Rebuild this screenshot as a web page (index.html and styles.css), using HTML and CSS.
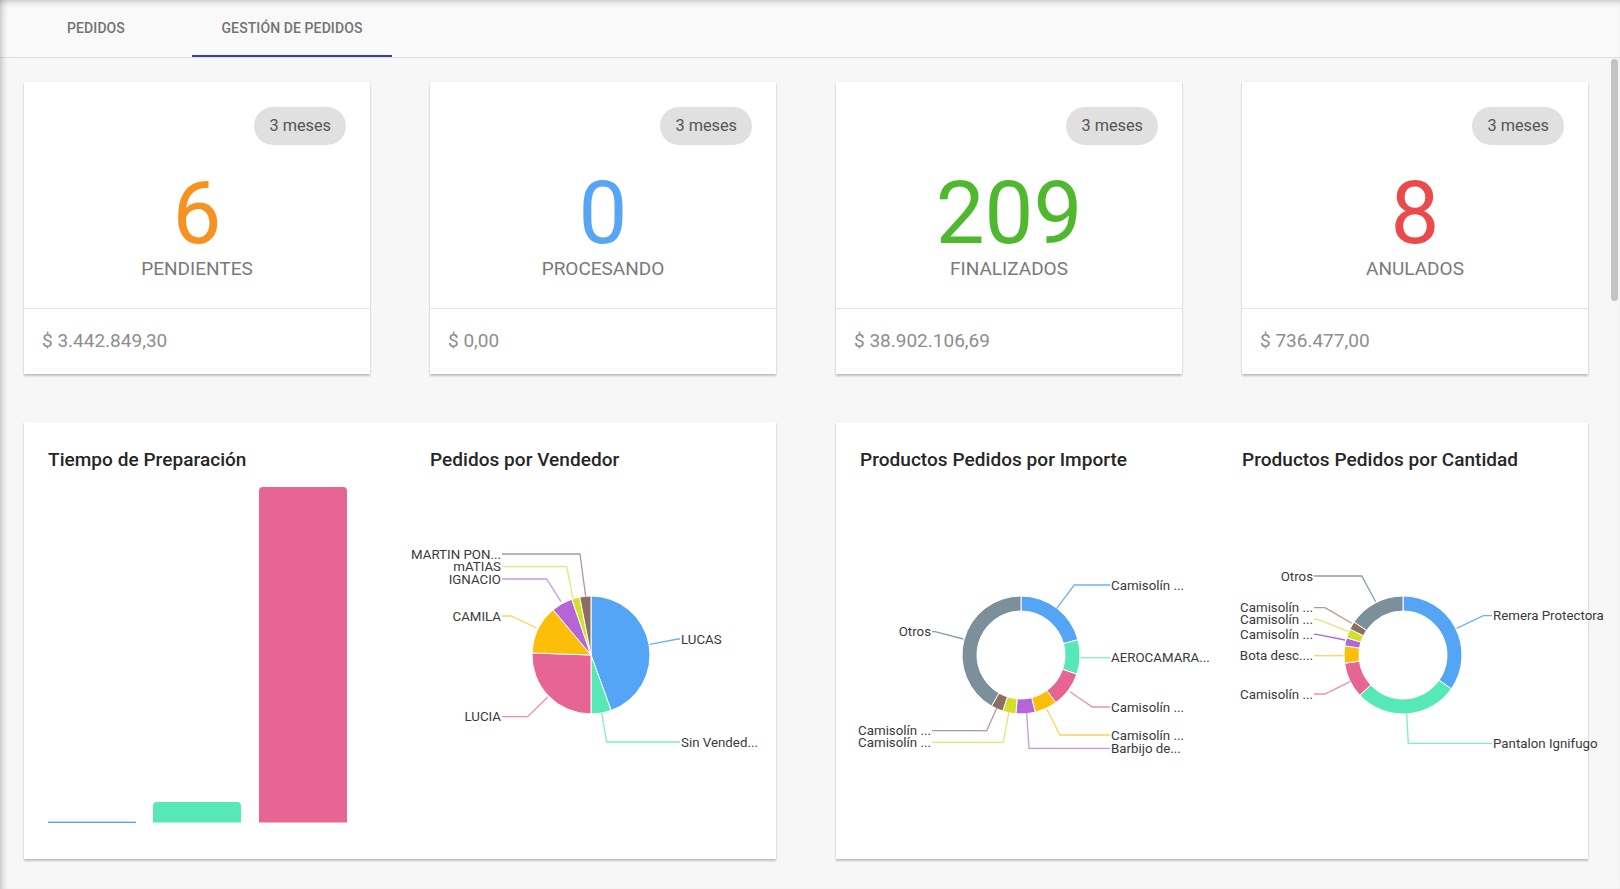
FILE: index.html
```html
<!DOCTYPE html>
<html lang="es">
<head>
<meta charset="utf-8">
<title>Gestión de pedidos</title>
<link rel="stylesheet" href="styles.css">
<script src="script.js" defer></script>
</head>
<body>
<div class="app">
  <nav class="tabs">
    <a class="tab tab-pedidos">PEDIDOS</a>
    <a class="tab tab-gestion active">GESTIÓN DE PEDIDOS</a>
  </nav>

  <main class="content">
    <section class="stats">
      <article class="stat">
        <div class="stat-head">
          <span class="badge">3 meses</span>
          <div class="stat-num c-orange">6</div>
          <div class="stat-label">PENDIENTES</div>
        </div>
        <div class="stat-foot">$ 3.442.849,30</div>
      </article>
      <article class="stat">
        <div class="stat-head">
          <span class="badge">3 meses</span>
          <div class="stat-num c-blue">0</div>
          <div class="stat-label">PROCESANDO</div>
        </div>
        <div class="stat-foot">$ 0,00</div>
      </article>
      <article class="stat">
        <div class="stat-head">
          <span class="badge">3 meses</span>
          <div class="stat-num c-green">209</div>
          <div class="stat-label">FINALIZADOS</div>
        </div>
        <div class="stat-foot">$ 38.902.106,69</div>
      </article>
      <article class="stat">
        <div class="stat-head">
          <span class="badge">3 meses</span>
          <div class="stat-num c-red">8</div>
          <div class="stat-label">ANULADOS</div>
        </div>
        <div class="stat-foot">$ 736.477,00</div>
      </article>
    </section>

    <section class="charts">
      <article class="chart-card">
        <div class="chart-col">
          <h3 class="chart-title">Tiempo de Preparación</h3>
          <svg class="chart" viewBox="0 0 358 361">
            <rect x="0" y="347.6" width="88" height="1.4" fill="#54a5f6"/>
            <path d="M105,348.5 V332 Q105,328 109,328 H189 Q193,328 193,332 V348.5 Z" fill="#56e9b6"/>
            <path d="M211,348.5 V17 Q211,13 215,13 H295 Q299,13 299,17 V348.5 Z" fill="#e76592"/>
          </svg>
        </div>
        <div class="chart-col">
          <h3 class="chart-title">Pedidos por Vendedor</h3>
          <svg class="chart" viewBox="0 0 322 361">
            <g class="slices" data-cx="161" data-cy="181" data-r="59" data-ri="0"
               data-slices="#54a5f6 0 160,#56e9b6 160 180,#e76592 180 272,#fbbf0a 272 320,#b565d6 320 341,#d3df2a 341 349,#8d6e63 349 360"></g>
            <g class="leaders">
              <polyline points="72,80 150,80 155.7,122.7" stroke="#b09a93"/>
              <polyline points="72,92.7 136.7,92.7 143,125" stroke="#e0e870"/>
              <polyline points="72,105 116.7,105 131,127.7" stroke="#cb97e2"/>
              <polyline points="72,142 81,142 106.7,154" stroke="#fcd45a"/>
              <polyline points="220,170.3 248,165 250,165" stroke="#6db3f8"/>
              <polyline points="72,242.7 97.7,242.7 118,222.7" stroke="#ef8fb0"/>
              <polyline points="171.7,239 176.7,268 250,268" stroke="#7deec6"/>
            </g>
            <g class="labels">
              <text x="71" y="80" dy="0.35em" text-anchor="end">MARTIN PON...</text>
              <text x="71" y="92.7" dy="0.35em" text-anchor="end">mATIAS</text>
              <text x="71" y="105" dy="0.35em" text-anchor="end">IGNACIO</text>
              <text x="71" y="142" dy="0.35em" text-anchor="end">CAMILA</text>
              <text x="251" y="165" dy="0.35em">LUCAS</text>
              <text x="71" y="242.7" dy="0.35em" text-anchor="end">LUCIA</text>
              <text x="251" y="268" dy="0.35em">Sin Vended...</text>
            </g>
          </svg>
        </div>
      </article>

      <article class="chart-card">
        <div class="chart-col">
          <h3 class="chart-title">Productos Pedidos por Importe</h3>
          <svg class="chart" viewBox="0 0 358 361">
            <g class="slices" data-cx="161" data-cy="181" data-r="59" data-ri="44"
               data-slices="#54a5f6 0 75,#56e9b6 75 109,#e76592 109 144,#fbbf0a 144 166,#b565d6 166 185,#d3df2a 185 198,#8d6e63 198 210,#7b909b 210 360"></g>
            <g class="leaders">
              <polyline points="196.7,134.3 214.3,111 250,111" stroke="#6db3f8"/>
              <polyline points="220.7,183.7 250,183.7" stroke="#7deec6"/>
              <polyline points="210,217.7 232.3,233 250,233" stroke="#ef8fb0"/>
              <polyline points="186.7,235 200,261 250,261" stroke="#fcd45a"/>
              <polyline points="166.7,239 169,274.3 250,274.3" stroke="#cb97e2"/>
              <polyline points="136.7,234.3 126.7,256.7 72,256.7" stroke="#b09a93"/>
              <polyline points="149,237.7 143.3,268.3 72,268.3" stroke="#e0e870"/>
              <polyline points="103.3,165 75,157.7 72,157.7" stroke="#8a9ea8"/>
            </g>
            <g class="labels">
              <text x="251" y="111" dy="0.35em">Camisolín ...</text>
              <text x="251" y="183.7" dy="0.35em">AEROCAMARA...</text>
              <text x="251" y="233" dy="0.35em">Camisolín ...</text>
              <text x="251" y="261" dy="0.35em">Camisolín ...</text>
              <text x="251" y="274.3" dy="0.35em">Barbijo de...</text>
              <text x="71" y="256.7" dy="0.35em" text-anchor="end">Camisolín ...</text>
              <text x="71" y="268.3" dy="0.35em" text-anchor="end">Camisolín ...</text>
              <text x="71" y="157.7" dy="0.35em" text-anchor="end">Otros</text>
            </g>
          </svg>
        </div>
        <div class="chart-col">
          <h3 class="chart-title">Productos Pedidos por Cantidad</h3>
          <svg class="chart" viewBox="0 0 322 361">
            <g class="slices" data-cx="161" data-cy="181" data-r="59" data-ri="44"
               data-slices="#54a5f6 0 125,#56e9b6 125 227,#e76592 227 262,#fbbf0a 262 279,#b565d6 279 287,#d3df2a 287 296,#8d6e63 296 304,#7b909b 304 360"></g>
            <g class="leaders">
              <polyline points="72,102 119.7,102 133.7,127.7" stroke="#8a9ea8"/>
              <polyline points="72,133.7 83,133.7 109.7,149.3" stroke="#b09a93"/>
              <polyline points="72,145.3 76,145.3 106.3,157.7" stroke="#e0e870"/>
              <polyline points="72,160.3 74.7,160.3 103,166" stroke="#b565d6"/>
              <polyline points="72,181.7 101.3,181.7" stroke="#fcd45a"/>
              <polyline points="72,220 83,220 108,207.7" stroke="#ef8fb0"/>
              <polyline points="214.7,154.3 241.3,141.7 250,141.7" stroke="#6db3f8"/>
              <polyline points="164.7,239.3 166.3,269.3 250,269.3" stroke="#7deec6"/>
            </g>
            <g class="labels">
              <text x="71" y="102" dy="0.35em" text-anchor="end">Otros</text>
              <text x="71" y="133.7" dy="0.35em" text-anchor="end">Camisolín ...</text>
              <text x="71" y="145.3" dy="0.35em" text-anchor="end">Camisolín ...</text>
              <text x="71" y="160.3" dy="0.35em" text-anchor="end">Camisolín ...</text>
              <text x="71" y="181.7" dy="0.35em" text-anchor="end">Bota desc....</text>
              <text x="71" y="220" dy="0.35em" text-anchor="end">Camisolín ...</text>
              <text x="251" y="141.7" dy="0.35em">Remera Protectora</text>
              <text x="251" y="269.3" dy="0.35em">Pantalon Ignifugo</text>
            </g>
          </svg>
        </div>
      </article>
    </section>
  </main>

  <div class="scroll-thumb"></div>
  <div class="frame-shadow"></div>
</div>
</body>
</html>
```

FILE: styles.css
```css
* {
  box-sizing: border-box;
  margin: 0;
  padding: 0;
}

html, body {
  height: 100%;
}

body {
  font-family: Roboto, "Noto Sans", "Liberation Sans", sans-serif;
  background: #f7f7f7;
  color: #212121;
  overflow: hidden;
}

.app {
  position: relative;
  height: 889px;
  overflow: hidden;
}

/* ---------- tabs ---------- */
.tabs {
  display: flex;
  height: 58px;
  border-bottom: 1px solid #e0e0e0;
  background: #f9f9f9;
}

.tab {
  display: flex;
  align-items: center;
  justify-content: center;
  height: 57px;
  border-bottom: 2px solid transparent;
  font-size: 14px;
  font-weight: 500;
  color: #737373;
  text-decoration: none;
  letter-spacing: 0.1px;
}

.tab-pedidos { width: 192px; }
.tab-gestion { width: 200px; }

.tab.active {
  border-bottom-color: #3b40a0;
}

/* ---------- content ---------- */
.content {
  padding: 24px 32px 24px 24px;
}

.stats {
  display: grid;
  grid-template-columns: repeat(4, 346px);
  column-gap: 60px;
}

.stat {
  background: #fff;
  height: 292px;
  display: flex;
  flex-direction: column;
  box-shadow: 0 2px 2px rgba(0, 0, 0, 0.22), 0 0 2px rgba(0, 0, 0, 0.08);
}

.stat-head {
  height: 227px;
  padding: 25px 24px 0;
  display: flex;
  flex-direction: column;
  align-items: center;
  border-bottom: 1px solid #e4e4e4;
}

.badge {
  align-self: flex-end;
  height: 38px;
  line-height: 38px;
  padding: 0 15px;
  border-radius: 19px;
  background: #e0e0e0;
  color: #555;
  font-size: 16.3px;
}

.stat-num {
  margin-top: 25px;
  font-size: 87px;
  line-height: 86px;
  font-weight: 400;
}

.c-orange { color: #f6921f; }
.c-blue { color: #58a5f5; }
.c-green { color: #4fb82f; }
.c-red { color: #ea4a4a; }

.stat-label {
  margin-top: 1px;
  font-size: 19px;
  line-height: 24px;
  color: #7a7a7a;
}

.stat-foot {
  flex: 1;
  display: flex;
  align-items: center;
  padding-left: 18px;
  padding-bottom: 2px;
  font-size: 19px;
  color: #8e8e8e;
}

/* ---------- charts ---------- */
.charts {
  margin-top: 48px;
  display: grid;
  grid-template-columns: repeat(2, 752px);
  column-gap: 60px;
}

.chart-card {
  background: #fff;
  height: 437px;
  padding: 24px;
  display: grid;
  grid-template-columns: 358px 322px;
  column-gap: 24px;
  box-shadow: 0 2px 2px rgba(0, 0, 0, 0.22), 0 0 2px rgba(0, 0, 0, 0.08);
}

.chart-title {
  font-size: 19px;
  line-height: 28px;
  font-weight: 500;
  color: #262626;
  letter-spacing: 0.05px;
}

.chart {
  display: block;
  width: 100%;
  height: 361px;
  overflow: visible;
}

.slices path {
  stroke: #fff;
  stroke-width: 1;
}

.leaders polyline {
  fill: none;
  stroke-width: 1.3;
}

.labels text {
  font-family: Roboto, "Noto Sans", sans-serif;
  font-size: 13.3px;
  fill: #3a3a3a;
}

/* ---------- overlays ---------- */
.scroll-thumb {
  position: absolute;
  top: 59px;
  right: 2px;
  width: 7px;
  height: 242px;
  border-radius: 4px;
  background: #c3c3c3;
}

.frame-shadow {
  position: absolute;
  inset: 0;
  pointer-events: none;
  box-shadow: inset 7px 0 7px -5px rgba(0, 0, 0, 0.22), inset 0 6px 6px -4px rgba(0, 0, 0, 0.2);
}
```

FILE: script.js
```js
(function () {
  var NS = 'http://www.w3.org/2000/svg';

  function pt(cx, cy, r, a) {
    var t = a * Math.PI / 180;
    return [cx + r * Math.sin(t), cy - r * Math.cos(t)];
  }

  function f(n) { return n.toFixed(2); }

  function seg(cx, cy, ro, ri, a0, a1) {
    var large = (a1 - a0) > 180 ? 1 : 0;
    var p0 = pt(cx, cy, ro, a0);
    var p1 = pt(cx, cy, ro, a1);
    if (ri > 0) {
      var p2 = pt(cx, cy, ri, a1);
      var p3 = pt(cx, cy, ri, a0);
      return 'M' + f(p0[0]) + ',' + f(p0[1]) +
        'A' + ro + ',' + ro + ' 0 ' + large + ' 1 ' + f(p1[0]) + ',' + f(p1[1]) +
        'L' + f(p2[0]) + ',' + f(p2[1]) +
        'A' + ri + ',' + ri + ' 0 ' + large + ' 0 ' + f(p3[0]) + ',' + f(p3[1]) + 'Z';
    }
    return 'M' + cx + ',' + cy +
      'L' + f(p0[0]) + ',' + f(p0[1]) +
      'A' + ro + ',' + ro + ' 0 ' + large + ' 1 ' + f(p1[0]) + ',' + f(p1[1]) + 'Z';
  }

  var groups = document.querySelectorAll('g.slices');
  for (var i = 0; i < groups.length; i++) {
    var g = groups[i];
    var cx = +g.getAttribute('data-cx');
    var cy = +g.getAttribute('data-cy');
    var ro = +g.getAttribute('data-r');
    var ri = +(g.getAttribute('data-ri') || 0);
    var list = g.getAttribute('data-slices').split(',');
    for (var j = 0; j < list.length; j++) {
      var parts = list[j].trim().split(/\s+/);
      var path = document.createElementNS(NS, 'path');
      path.setAttribute('d', seg(cx, cy, ro, ri, +parts[1], +parts[2]));
      path.setAttribute('fill', parts[0]);
      g.appendChild(path);
    }
  }
})();
```
